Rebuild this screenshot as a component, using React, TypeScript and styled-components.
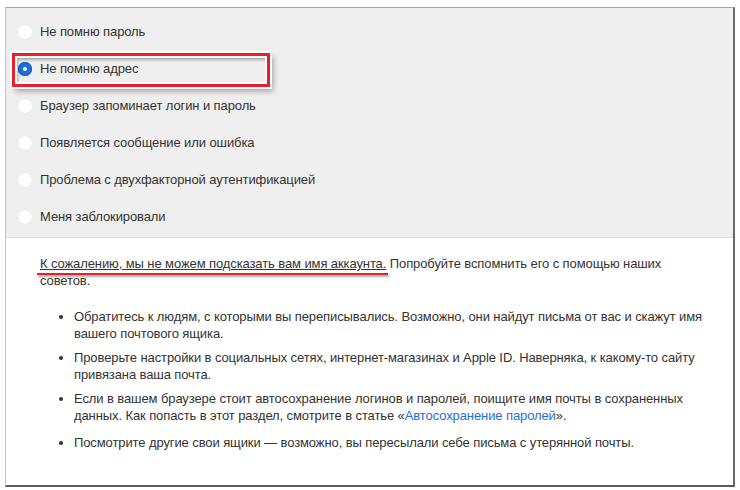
import React from 'react';
import styled, { createGlobalStyle } from 'styled-components';

const GlobalStyle = createGlobalStyle`
  html, body {
    margin: 0;
    padding: 0;
    background: #ffffff;
  }
  body {
    font-family: Arial, 'Liberation Sans', sans-serif;
    color: #333333;
  }
`;

const Page = styled.div`
  padding: 7px 0 0 5px;
`;

const Frame = styled.div`
  width: 730px;
  height: 480px;
  box-sizing: border-box;
  border-left: 1px solid #c4c4c4;
  border-top: 1px solid #a8a8a8;
  border-right: 2px solid #6a6a6a;
  border-bottom: 2px solid #5a5a5a;
  overflow: hidden;
  background: #ffffff;
  letter-spacing: -0.1px;
`;

const Options = styled.div`
  background: #efefef;
  height: 230px;
  box-sizing: border-box;
  padding-top: 5px;
  border-bottom: 1px solid #e2e2e2;
`;

const OptionRow = styled.label`
  position: relative;
  display: flex;
  align-items: center;
  gap: 8px;
  height: 37px;
  padding-left: 12px;
  font-size: 13px;
  color: #333;
`;

const Radio = styled.span<{ $checked?: boolean }>`
  width: 14px;
  height: 14px;
  border-radius: 50%;
  box-sizing: border-box;
  flex: none;
  background: ${(p) => (p.$checked ? '#1b6fe0' : '#ffffff')};
  box-shadow: ${(p) =>
    p.$checked ? 'inset 0 0 0 1px #1560c8' : '0 0 1px rgba(0, 0, 0, 0.12)'};
  display: flex;
  align-items: center;
  justify-content: center;

  &::after {
    content: '';
    width: 4px;
    height: 4px;
    border-radius: 50%;
    background: #ffffff;
    display: ${(p) => (p.$checked ? 'block' : 'none')};
  }
`;

/* красная рамка-выделение поверх выбранного пункта */
const Highlight = styled.span`
  position: absolute;
  left: 6px;
  top: 3px;
  width: 258px;
  height: 34px;
  box-sizing: border-box;
  border: 3px solid #e8202a;
  box-shadow: 0 0 0 2px #ffffff, 3px 4px 6px rgba(0, 0, 0, 0.35),
    inset 0 0 0 2px #ffffff, inset 3px 4px 3px rgba(0, 0, 0, 0.3);
  pointer-events: none;
`;

const Info = styled.div`
  padding: 17px 20px 0 34px;
  font-size: 13px;
  line-height: 17px;
  color: #333;
`;

const Lead = styled.p`
  margin: 0;
  max-width: 668px;
`;

const Marked = styled.span`
  position: relative;
  text-decoration: underline;

  &::after {
    content: '';
    position: absolute;
    left: -3px;
    right: -2px;
    bottom: -4px;
    height: 2px;
    background: #e8202a;
    box-shadow: 1px 2px 2px rgba(0, 0, 0, 0.35);
  }
`;

const Tips = styled.ul`
  margin: 19px 0 0 0;
  padding-left: 34px;
  max-width: 640px;
`;

const Tip = styled.li<{ $gap?: number }>`
  margin-top: ${(p) => p.$gap ?? 7}px;
  &:first-child {
    margin-top: 0;
  }
`;

const TipLink = styled.a`
  color: #1f6fd6;
  text-decoration: none;
`;

const options = [
  'Не помню пароль',
  'Не помню адрес',
  'Браузер запоминает логин и пароль',
  'Появляется сообщение или ошибка',
  'Проблема с двухфакторной аутентификацией',
  'Меня заблокировали',
];

const App: React.FC = () => {
  return (
    <Page>
      <GlobalStyle />
      <Frame>
        <Options>
          {options.map((label, i) => (
            <OptionRow key={label}>
              <Radio $checked={i === 1} />
              {label}
              {i === 1 && <Highlight />}
            </OptionRow>
          ))}
        </Options>
        <Info>
          <Lead>
            <Marked>К сожалению, мы не можем подсказать вам имя аккаунта.</Marked> Попробуйте
            вспомнить его с помощью наших советов.
          </Lead>
          <Tips>
            <Tip>
              Обратитесь к людям, с которыми вы переписывались. Возможно, они найдут письма от
              вас и скажут имя вашего почтового ящика.
            </Tip>
            <Tip>
              Проверьте настройки в социальных сетях, интернет-магазинах и Apple ID. Наверняка, к
              какому-то сайту привязана ваша почта.
            </Tip>
            <Tip>
              Если в вашем браузере стоит автосохранение логинов и паролей, поищите имя почты в
              сохраненных данных. Как попасть в этот раздел, смотрите в статье «
              <TipLink href="#">Автосохранение паролей</TipLink>».
            </Tip>
            <Tip $gap={10}>
              Посмотрите другие свои ящики — возможно, вы пересылали себе письма с утерянной
              почты.
            </Tip>
          </Tips>
        </Info>
      </Frame>
    </Page>
  );
};

export default App;
